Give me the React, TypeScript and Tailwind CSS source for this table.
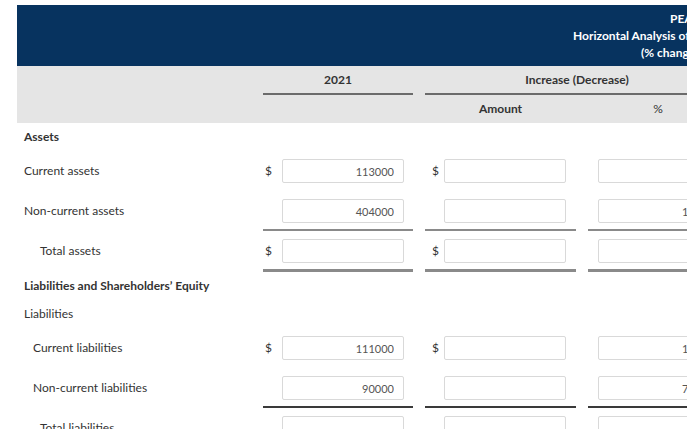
import React from 'react'

type CellProps = {
  dollar?: boolean
  value?: string
  line?: 'thin' | 'thick' | 'dark'
  kind?: 'c1' | 'c2' | 'c3'
}

const lineCls = {
  thin: 'pb-[6px] border-b-2 border-[#8a8a8a]',
  thick: 'pb-[6px] border-b-[3px] border-[#8a8a8a]',
  dark: 'pb-[6px] border-b-2 border-[#3a3a3a]',
}

function Cell({ dollar, value = '', line, kind = 'c1' }: CellProps) {
  const wrap =
    kind === 'c1' ? 'w-[150px]' : kind === 'c2' ? 'ml-[12px] w-[151px]' : 'ml-[12px] w-[150px]'
  return (
    <div className={`${wrap} flex items-center pt-[8px] ${line ? lineCls[line] : 'pb-[8px]'}`}>
      {kind === 'c3' ? (
        <div className="w-[10px] shrink-0" />
      ) : (
        <span
          className={`w-[19px] shrink-0 text-[12px] leading-[24px] ${kind === 'c1' ? 'pl-[2px]' : 'pl-[7px]'}`}
        >
          {dollar ? '$' : ''}
        </span>
      )}
      <input
        readOnly
        value={value}
        className="h-[24px] w-[122px] shrink-0 rounded-[2px] border border-[#d9d9d9] bg-white pr-[9px] text-right text-[11px] text-[#555] outline-none"
      />
    </div>
  )
}

type RowProps = {
  label: string
  indent: string
  c1?: string
  c3?: string
  dollar?: boolean
  line?: 'thin' | 'thick' | 'dark'
}

function Row({ label, indent, c1, c3, dollar, line }: RowProps) {
  return (
    <div className="flex">
      <div className={`w-[246px] shrink-0 pt-[8px] text-[12px] leading-[24px] ${indent}`}>{label}</div>
      <Cell kind="c1" dollar={dollar} value={c1} line={line} />
      <Cell kind="c2" dollar={dollar} line={line} />
      <Cell kind="c3" value={c3} line={line} />
    </div>
  )
}

export default function App() {
  return (
    <div className="min-h-screen bg-white pl-[17px] pt-[5px] font-['Lato',sans-serif] text-[#333]">
      <div className="w-[670px] overflow-hidden">
        <div className="w-[760px]">
          {/* blue title band */}
          <div className="flex h-[61px] flex-col bg-[#07335f] pt-[5px] text-[12px] font-bold leading-[17px] text-white whitespace-nowrap">
            <div className="pl-[653px]">PEARL CORPORATION</div>
            <div className="pl-[556px]">Horizontal Analysis of Balance Sheets</div>
            <div className="pl-[624px]">(% change from 2020)</div>
          </div>

          {/* column headings */}
          <div className="bg-[#e5e5e5] text-[12px] font-bold">
            <div className="flex h-[29px]">
              <div className="w-[246px] shrink-0" />
              <div className="flex w-[150px] items-center justify-center border-b-2 border-[#6b6b6b]">2021</div>
              <div className="ml-[12px] flex w-[304px] items-center justify-center border-b-2 border-[#6b6b6b]">
                Increase (Decrease)
              </div>
            </div>
            <div className="flex h-[28px] items-center">
              <div className="w-[408px] shrink-0" />
              <div className="w-[151px] text-center">Amount</div>
              <div className="ml-[12px] w-[140px] text-center font-normal">%</div>
            </div>
          </div>

          {/* assets */}
          <div className="flex h-[28px] items-center pl-[7px] text-[12px] font-bold">Assets</div>
          <Row label="Current assets" indent="pl-[7px]" c1="113000" dollar />
          <Row label="Non-current assets" indent="pl-[7px]" c1="404000" c3="13.27" line="thin" />
          <Row label="Total assets" indent="pl-[23px]" dollar line="thick" />

          {/* liabilities */}
          <div className="flex h-[28px] items-center pl-[7px] text-[12px] font-bold">
            Liabilities and Shareholders’ Equity
          </div>
          <div className="flex h-[28px] items-center pl-[7px] text-[12px]">Liabilities</div>
          <Row label="Current liabilities" indent="pl-[16px]" c1="111000" c3="10.89" dollar />
          <Row label="Non-current liabilities" indent="pl-[16px]" c1="90000" c3="7.143" line="dark" />
          <Row label="Total liabilities" indent="pl-[23px]" />
        </div>
      </div>
    </div>
  )
}
